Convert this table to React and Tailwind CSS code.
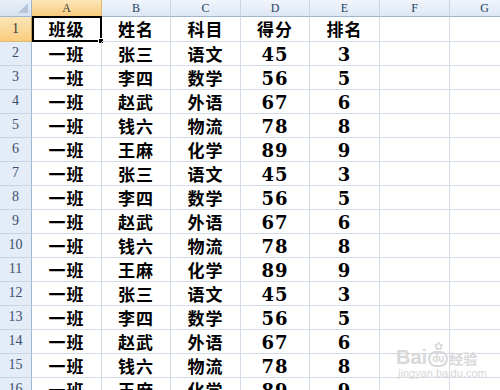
import React from "react";

const cols = ["A", "B", "C", "D", "E", "F", "G"];
const widths = ["w-[70px]", "w-[69px]", "w-[70px]", "w-[69px]", "w-[70px]", "w-[70px]", "w-[70px]"];

const block = [
  ["一班", "张三", "语文", "45", "3"],
  ["一班", "李四", "数学", "56", "5"],
  ["一班", "赵武", "外语", "67", "6"],
  ["一班", "钱六", "物流", "78", "8"],
  ["一班", "王麻", "化学", "89", "9"],
];

const rows = [["班级", "姓名", "科目", "得分", "排名"], ...block, ...block, ...block];

const cjk = "font-['Noto_Sans_CJK_SC',sans-serif]";
const num = "font-['Liberation_Serif','Noto_Sans_CJK_SC',serif]";
const digits = "font-['DejaVu_Serif','Liberation_Serif',serif]";

function Cell({ value, w, first }) {
  const isNum = value && /^\d+$/.test(value);
  return (
    <div
      className={`relative ${w} shrink-0 h-full border-r border-b border-[#d4dbe7] flex items-center justify-center text-black font-bold ${
        isNum ? `${digits} text-[18px] tracking-[1px] pt-[2px]` : `${cjk} text-[17px] tracking-[1px]`
      }`}
    >
      {value}
      {first && (
        <div className="absolute left-0 -top-[1px] w-[70px] h-[26px] border-2 border-black pointer-events-none">
          <div className="absolute -right-[4px] -bottom-[4px] w-[6px] h-[6px] bg-black border border-white" />
        </div>
      )}
    </div>
  );
}

export default function App() {
  return (
    <div className="relative w-[500px] h-[390px] overflow-hidden bg-white select-none">
      {/* column header */}
      <div className="flex h-[17px]">
        <div className="relative w-[32px] shrink-0 h-full bg-gradient-to-b from-[#e9eff8] to-[#d6e1f0] border-r border-b border-[#9eb6ce]">
          <div className="absolute right-[3px] bottom-[3px] w-0 h-0 border-l-[10px] border-l-transparent border-b-[10px] border-b-[#b5c6dc]" />
        </div>
        {cols.map((c, i) => (
          <div
            key={c}
            className={`${widths[i]} shrink-0 h-full flex items-center justify-center text-[12px] ${num} border-r border-b ${
              i === 0
                ? "bg-gradient-to-b from-[#fce6b8] to-[#f8cc7c] border-r-[#e0b870] border-b-[#c29b57] text-[#3a3a3a]"
                : "bg-gradient-to-b from-[#f1f5fb] to-[#dde7f4] border-r-[#c8d4e4] border-b-[#9eb6ce] text-[#27415f]"
            }`}
          >
            {c}
          </div>
        ))}
      </div>

      {rows.map((r, ri) => (
        <div key={ri} className={`flex ${ri === 0 ? "h-[25px]" : "h-[24px]"}`}>
          <div
            className={`w-[32px] shrink-0 h-full flex items-end justify-center pb-[2px] text-[14px] ${num} border-r border-b ${
              ri === 0
                ? "bg-gradient-to-b from-[#fce6b8] to-[#f8cc7c] border-r-[#c29b57] border-b-[#e0b870] text-[#3a3a3a]"
                : "bg-[#e4ecf7] border-r-[#9eb6ce] border-b-[#c8d4e4] text-[#3b4f6e]"
            }`}
          >
            {ri + 1}
          </div>
          {[...r, "", ""].map((v, ci) => (
            <Cell key={ci} value={v} w={widths[ci]} first={ri === 0 && ci === 0} />
          ))}
        </div>
      ))}

      {/* watermark */}
      <div className="absolute left-[396px] top-[340px] flex items-end gap-[1px] text-[#d8d8d8] pointer-events-none whitespace-nowrap">
        <span className="font-['Liberation_Sans',sans-serif] font-bold text-[20px] leading-[20px]">Bai</span>
        <span className="flex flex-col items-center">
          <span className="text-[11px] leading-[11px]">✿</span>
          <span className="font-['Liberation_Sans',sans-serif] font-bold text-[10px] leading-[12px] px-[2px] rounded-full border-2 border-[#d8d8d8]">
            du
          </span>
        </span>
        <span className={`${cjk} font-bold text-[14px] leading-[18px]`}>经验</span>
      </div>
      <div className="absolute left-[398px] top-[368px] font-['Liberation_Sans',sans-serif] text-[11px] leading-[11px] text-[#d8d8d8] pointer-events-none whitespace-nowrap">
        jingyan.baidu.com
      </div>
    </div>
  );
}
